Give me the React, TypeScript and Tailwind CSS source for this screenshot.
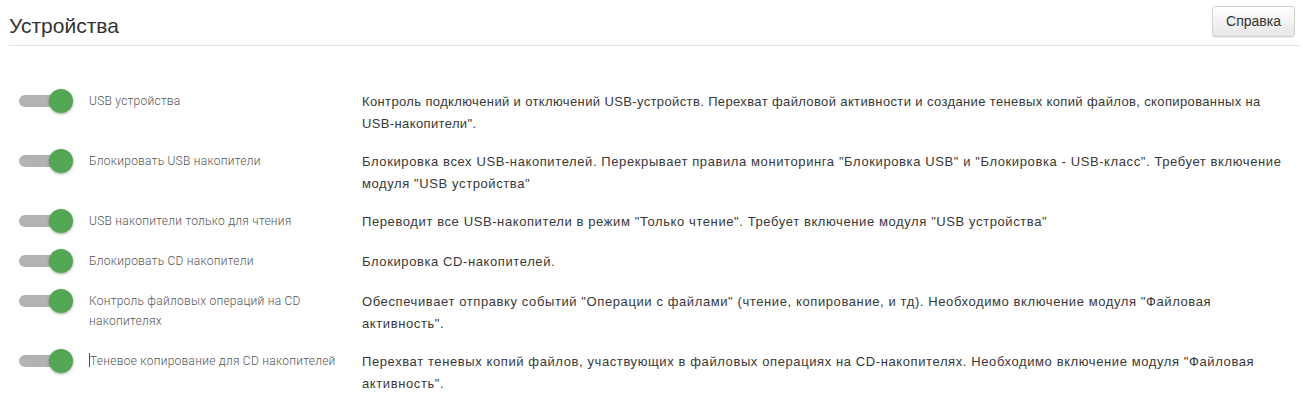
import React from "react";

interface deviceRowIF {
  label: string;
  description: string;
  caret?: boolean;
  tight?: boolean;
}

const rows: deviceRowIF[] = [
  {
    label: "USB устройства",
    description:
      'Контроль подключений и отключений USB-устройств. Перехват файловой активности и создание теневых копий файлов, скопированных на USB-накопители".',
    tight: true,
  },
  {
    label: "Блокировать USB накопители",
    description:
      'Блокировка всех USB-накопителей. Перекрывает правила мониторинга "Блокировка USB" и "Блокировка - USB-класс". Требует включение модуля "USB устройства"',
  },
  {
    label: "USB накопители только для чтения",
    description:
      'Переводит все USB-накопители в режим "Только чтение". Требует включение модуля "USB устройства"',
  },
  {
    label: "Блокировать CD накопители",
    description: "Блокировка CD-накопителей.",
  },
  {
    label: "Контроль файловых операций на CD накопителях",
    description:
      'Обеспечивает отправку событий "Операции с файлами" (чтение, копирование, и тд). Необходимо включение модуля "Файловая активность".',
  },
  {
    label: "Теневое копирование для CD накопителей",
    description:
      'Перехват теневых копий файлов, участвующих в файловых операциях на CD-накопителях. Необходимо включение модуля "Файловая активность".',
    caret: true,
  },
];

// green switch, always on in this screen
const Toggle = () => (
  <div className="relative h-6 w-[54px] shrink-0">
    <div className="absolute left-0 top-[6px] h-3 w-[46px] rounded-full bg-[#b3b3b3]" />
    <div className="absolute right-0 top-0 h-6 w-6 rounded-full bg-[#53a653] shadow-[0_1px_3px_rgba(0,0,0,0.35)]" />
  </div>
);

const App = () => {
  return (
    <div className="w-full bg-white font-['Liberation_Sans',Arial,sans-serif] text-[#333]">
      <div className="pl-[9px] pr-[3px]">
        <div className="flex h-[46px] items-center justify-between border-b border-[#e3e3e3]">
          <h1 className="pt-[7px] text-[21px] leading-6 text-[#333]">Устройства</h1>
          <button className="mr-[5px] mb-[3px] h-[31px] w-[83px] rounded-[3px] border border-[#cfcfcf] bg-gradient-to-b from-white to-[#e6e6e6] text-[14px] text-[#333] shadow-[0_1px_1px_rgba(0,0,0,0.06)]">
            Справка
          </button>
        </div>
      </div>

      <div className="pt-[45px]">
        {rows.map((row, index) => (
          <div key={index} className="flex min-h-[40px] items-start pr-[8px]">
            <div className="-mt-[2px] w-[89px] shrink-0 pl-[19px]">
              <Toggle />
            </div>
            <div className="w-[273px] shrink-0">
              <div className="w-[258px] font-['Roboto',sans-serif] text-[12px] font-light leading-5 tracking-[0.25px] text-[#555]">
                {row.caret && (
                  <span className="inline-block h-[14px] w-px translate-y-[2px] bg-[#555]" />
                )}
                {row.label}
              </div>
            </div>
            <p
              className={
                row.tight
                  ? "flex-1 pb-4 text-[13px] leading-[22px] tracking-[0.37px] text-[#383838]"
                  : "flex-1 pb-4 text-[13px] leading-[22px] tracking-[0.6px] text-[#383838]"
              }
            >
              {row.description}
            </p>
          </div>
        ))}
      </div>
    </div>
  );
};

export default App;
